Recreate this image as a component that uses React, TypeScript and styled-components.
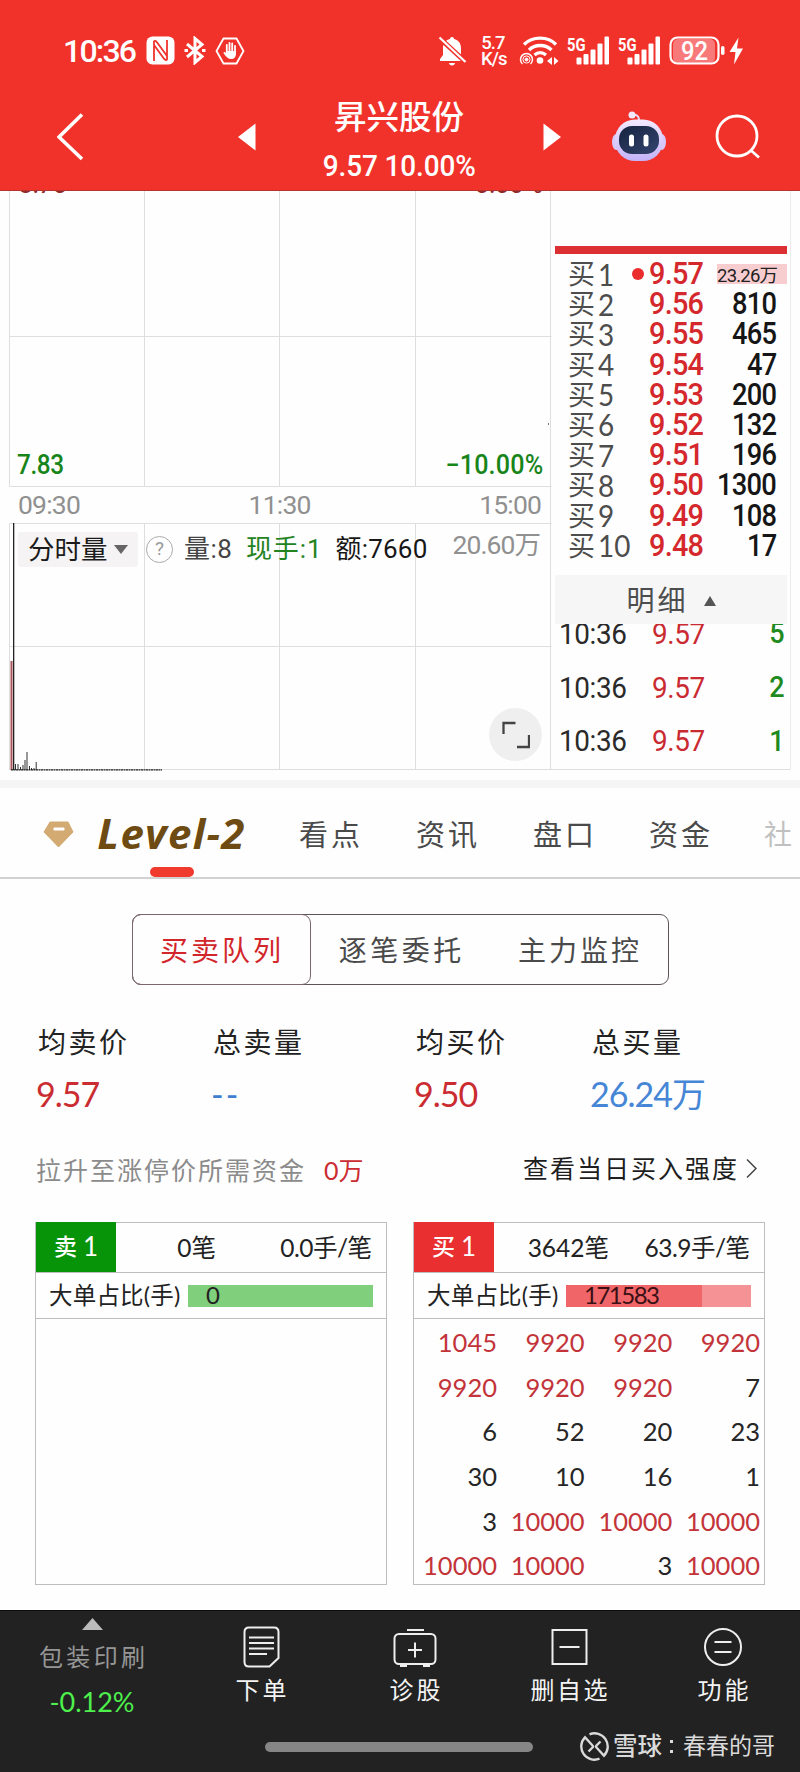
import React from 'react';
import styled, { createGlobalStyle } from 'styled-components';

const DIN = `Roboto, "Noto Sans CJK SC", sans-serif`;
const KAI = `Lato, "Noto Sans CJK SC", sans-serif`;

const GlobalStyle = createGlobalStyle`
  * { box-sizing: border-box; }
  body { margin: 0; background: #fff; }
  svg { display: block; flex: none; }
`;

const Screen = styled.div`
  width: 800px;
  height: 1772px;
  overflow: hidden;
  display: flex;
  flex-direction: column;
  background: #fefefe;
  font-family: ${KAI};
  color: #222;
`;

const Label = styled.span<{ $size: number; $ls?: number; $color?: string; $weight?: number; $din?: boolean; $narrow?: 'left' | 'right' | 'center'; $scale?: number }>`
  font-family: ${p => (p.$din ? DIN : KAI)};
  font-size: ${p => p.$size}px;
  line-height: 1.2;
  letter-spacing: ${p => p.$ls ?? 0}px;
  margin-right: ${p => -(p.$ls ?? 0)}px;
  color: ${p => p.$color ?? 'inherit'};
  font-weight: ${p => p.$weight ?? 400};
  white-space: nowrap;
  flex: none;
  ${p => p.$narrow && `display: inline-block; transform: scaleX(${p.$scale ?? 0.93}); transform-origin: ${p.$narrow} center;`}
`;

/* ---------- header ---------- */
const Header = styled.header`
  height: 191px;
  flex: none;
  background: #f1322b;
  border-bottom: 1px solid #b9332e;
  color: #fff;
`;
const StatusBar = styled.div`
  height: 74px;
  padding: 28px 56px 0 63px;
  display: flex;
  align-items: center;
`;
const StatusGroup = styled.div<{ $gap: number; $right?: boolean }>`
  display: flex;
  align-items: center;
  gap: ${p => p.$gap}px;
  margin-left: ${p => (p.$right ? 'auto' : '0')};
`;
const NetSpeed = styled.div`
  width: 24px;
  margin: 0 6px;
  font: 500 18.5px/16px ${DIN};
  letter-spacing: -0.9px;
  text-align: center;
`;
const TitleBar = styled.div`
  height: 116px;
  padding-top: 10px;
  display: grid;
  grid-template-columns: 57px 181px 85px 220px 69px 103px 1fr;
  align-items: center;
  & > :first-child { grid-column: 2; }
`;
const StockTitle = styled.div`
  display: flex;
  flex-direction: column;
  align-items: center;
  width: 152px;
  padding-top: 2px;
`;
const StockName = styled.h1`
  margin: 0 0 5px;
  font: 500 32.5px/50px ${DIN};
`;

/* ---------- quote area ---------- */
const Quote = styled.section`
  position: relative;
  height: 589px;
  flex: none;
  display: grid;
  grid-template-columns: 551px 249px;
`;
const ChartArt = styled.svg`
  position: absolute;
  left: 0;
  top: 0;
`;
const ChartPane = styled.div`
  position: relative;
  display: flex;
  flex-direction: column;
`;
const ClippedScale = styled.div`
  height: 4px;
  overflow: hidden;
  padding: 0 8px 0 18px;
  display: flex;
  justify-content: space-between;
  align-items: flex-end;
  & > span { margin-bottom: -5px; }
`;
const ScaleRow = styled.div<{ $top: number; $height: number; $left: number; $right: number }>`
  margin-top: ${p => p.$top}px;
  height: ${p => p.$height}px;
  padding: 0 ${p => p.$right}px 0 ${p => p.$left}px;
  display: flex;
  align-items: center;
  justify-content: space-between;
`;
const VolumeRow = styled.div`
  margin-top: 13px;
  height: 35px;
  padding: 0 10px 0 18px;
  display: flex;
  align-items: center;
`;
const MetricButton = styled.button`
  border: 0;
  width: 120px;
  height: 35px;
  padding: 0 10px;
  border-radius: 3px;
  background: #f6f3f4;
  display: flex;
  align-items: center;
  justify-content: space-between;
  color: #1b1b1b;
`;
const Help = styled.span`
  width: 27px;
  height: 27px;
  margin: 0 11px 0 8px;
  border: 1.5px solid #aaa;
  border-radius: 50%;
  color: #999;
  font: 19px/24px ${DIN};
  text-align: center;
`;
const Metrics = styled.div`
  display: flex;
  gap: 14px;
  flex: 1;
`;
const VolumeMax = styled.div`
  padding-bottom: 9px;
`;
const ExpandButton = styled.button`
  margin: 141px 9px 0 auto;
  width: 53px;
  height: 53px;
  border: 0;
  padding: 0;
  border-radius: 50%;
  background: #efefef;
  display: grid;
  place-items: center;
`;
const BookPane = styled.div`
  position: relative;
  padding: 55px 13px 0 4px;
`;
const AskBar = styled.div`
  height: 8px;
  background: #dc2f32;
`;
const Book = styled.div`
  padding-top: 4px;
  margin-bottom: 15px;
`;
const BookRow = styled.div`
  height: 30.2px;
  display: grid;
  grid-template-columns: 13px 64px 17px 1fr auto;
  align-items: center;
  padding-right: 10px;
  & span { line-height: 1; }
`;
const LevelName = styled.div`
  display: flex;
  align-items: center;
  gap: 3px;
  color: #4d4d4d;
`;
const Dot = styled.i`
  width: 12px;
  height: 12px;
  border-radius: 50%;
  background: #ea2d2d;
`;
const Highlight = styled.div`
  height: 20px;
  width: 70px;
  margin-right: -10px;
  padding: 5px 9px 0 0;
  background: #f8cdd0;
  display: flex;
  align-items: center;
  justify-content: flex-end;
`;
const DetailBar = styled.div`
  height: 49px;
  background: #f6f6f6;
  display: flex;
  align-items: center;
  justify-content: center;
  gap: 18px;
  color: #4d4d4d;
  padding-top: 3px;
`;
const Trades = styled.div`
  height: 145px;
  overflow: hidden;
`;
const TradeRow = styled.div<{ $first?: boolean }>`
  height: 53.8px;
  margin-top: ${p => (p.$first ? -17 : 0)}px;
  padding: 0 3px 0 4px;
  display: grid;
  grid-template-columns: 93px 1fr auto;
  align-items: center;
`;

/* ---------- tabs ---------- */
const Band = styled.div`
  height: 8px;
  flex: none;
  background: #f5f5f5;
`;
const Tabs = styled.nav`
  height: 91px;
  flex: none;
  border-bottom: 2px solid #d2d2d2;
  display: grid;
  grid-template-columns: 98px 201px 117px 117px 116px 115px 1fr;
  color: #4a4a4a;
`;
const Tab = styled.div<{ $fade?: boolean }>`
  display: flex;
  align-items: center;
  padding-top: 5px;
  overflow: hidden;
  opacity: ${p => (p.$fade ? 0.34 : 1)};
`;
const ActiveTab = styled.div`
  display: flex;
  flex-direction: column;
  width: 147px;
  align-items: center;
  justify-content: space-between;
  padding-top: 22px;
`;
const Level = styled.span`
  font: italic 700 42px/46px "Open Sans", Lato, sans-serif;
  letter-spacing: 1.3px;
  color: #6d4b12;
  white-space: nowrap;
`;
const Underline = styled.i`
  width: 44px;
  height: 10px;
  border-radius: 5px;
  background: #f13a2e;
`;

/* ---------- segmented control ---------- */
const Segments = styled.div`
  width: 537px;
  height: 71px;
  flex: none;
  margin: 35px 0 0 132px;
  border: 1px solid #5d5458;
  border-radius: 9px;
  display: grid;
  grid-template-columns: 178px 180px 1fr;
`;
const Segment = styled.button<{ $active?: boolean }>`
  border: 0;
  padding: 2px 2px 0 0;
  background: none;
  display: flex;
  align-items: center;
  justify-content: center;
  color: ${p => (p.$active ? '#d2262b' : '#4a4a4a')};
  margin: ${p => (p.$active ? '-1px 0 -1px -1px' : '0')};
  ${p => p.$active && 'border: 1px solid #7b666c; border-radius: 9px;'}
`;

/* ---------- summary ---------- */
const Summary = styled.div`
  height: 130px;
  flex: none;
  padding: 37px 0 0 36px;
  display: grid;
  grid-template-columns: 175px 203px 176px 1fr;
`;
const Stat = styled.div`
  display: flex;
  flex-direction: column;
  gap: 13px;
  & > :first-child { padding-left: 2px; line-height: 40px; }
  & > :last-child { line-height: 38px; }
`;
const FundsRow = styled.div`
  height: 107px;
  flex: none;
  padding: 3px 43px 0 36px;
  display: flex;
  align-items: center;
`;
const FundsValue = styled.div`
  margin-left: 20px;
`;
const FundsLink = styled.a`
  margin-left: auto;
  padding-bottom: 4px;
  display: flex;
  align-items: center;
  gap: 9px;
  color: #1e1e1e;
`;

/* ---------- queues ---------- */
const Queues = styled.div`
  flex: none;
  padding: 0 35px;
  display: flex;
  justify-content: space-between;
`;
const Card = styled.div`
  width: 352px;
  height: 363px;
  border: 1px solid #bdbdbd;
`;
const CardHead = styled.div<{ $count: number }>`
  height: 50px;
  border-bottom: 1px solid #bdbdbd;
  display: grid;
  grid-template-columns: 80px ${p => p.$count}px 1fr;
  align-items: center;
  justify-items: end;
  padding-right: 14px;
  color: #222;
`;
const Side = styled.div<{ $color: string }>`
  align-self: stretch;
  justify-self: stretch;
  margin-top: -1px;
  background: ${p => p.$color};
  color: #fff;
  display: flex;
  align-items: center;
  justify-content: center;
  gap: 6px;
`;
const RatioRow = styled.div`
  height: 46px;
  border-bottom: 1px solid #bdbdbd;
  padding: 0 13px;
  display: flex;
  align-items: center;
  justify-content: space-between;
`;
const RatioBar = styled.div<{ $from: string; $to: string; $split: number }>`
  width: 185px;
  height: 22px;
  display: flex;
  align-items: center;
  padding-left: 18px;
  background: linear-gradient(90deg, ${p => p.$from} ${p => p.$split}%, ${p => p.$to} ${p => p.$split}%);
`;
const Orders = styled.div`
  padding: 1px 4px 0 0;
  display: grid;
  grid-template-columns: 83px repeat(3, 1fr);
  grid-auto-rows: 44.7px;
  align-items: center;
  justify-items: end;
`;

/* ---------- bottom bar ---------- */
const Footer = styled.footer`
  margin-top: auto;
  height: 162px;
  flex: none;
  background: #222;
  border-top: 1px solid #0c0c0c;
  color: #f4f4f4;
`;
const NavRow = styled.div`
  height: 121px;
  display: grid;
  grid-template-columns: 184px repeat(4, 154px);
`;
const NavItem = styled.div`
  display: flex;
  flex-direction: column;
  align-items: center;
  padding-top: 15px;
  gap: 8px;
`;
const Industry = styled.div`
  display: flex;
  flex-direction: column;
  align-items: center;
  padding-top: 7px;
  & > :nth-child(2) { line-height: 53px; }
  & > :nth-child(3) { line-height: 37px; }
`;
const HomeRow = styled.div`
  height: 30px;
  padding: 0 25px 0 265px;
  display: flex;
  align-items: center;
  justify-content: space-between;
`;
const HomeIndicator = styled.i`
  width: 268px;
  height: 10px;
  border-radius: 5px;
  background: #868686;
`;
const Watermark = styled.div`
  display: flex;
  align-items: center;
  gap: 4px;
  color: #dadada;
`;
const Colon = styled.i`
  width: 3px;
  height: 13px;
  margin: 0 6px 0 4px;
  border: solid #dadada;
  border-width: 3px 0;
`;

const Signal = () => (
  <svg width="43" height="30" viewBox="0 0 43 30">
    <text x="0" y="14.500" fill="#fff" fontFamily="Roboto" fontWeight="700" fontSize="18" textLength="18.500" lengthAdjust="spacingAndGlyphs">5G</text>
    <g fill="#fff">
      <rect x="9.500" y="21.500" width="5" height="7" rx="1" /><rect x="16.500" y="18" width="5" height="10.500" rx="1" />
      <rect x="23.500" y="13.500" width="5" height="15" rx="1" /><rect x="30.500" y="7.500" width="5" height="21" rx="1" />
      <rect x="37.500" y="0.500" width="4.500" height="28" rx="1" />
    </g>
  </svg>
);

const levels: [string, string, string][] = [
  ['1', '9.57', '23.26万'], ['2', '9.56', '810'], ['3', '9.55', '465'], ['4', '9.54', '47'], ['5', '9.53', '200'],
  ['6', '9.52', '132'], ['7', '9.51', '196'], ['8', '9.50', '1300'], ['9', '9.49', '108'], ['10', '9.48', '17'],
];
const orders = [
  1045, 9920, 9920, 9920, 9920, 9920, 9920, 7, 6, 52, 20, 23,
  30, 10, 16, 1, 3, 10000, 10000, 10000, 10000, 10000, 3, 10000,
];
const stats: [string, string, string, number][] = [
  ['均卖价', '9.57', '#cb2c31', -1], ['总卖量', '--', '#3f7fd0', 2], ['均买价', '9.50', '#cb2c31', -1], ['总买量', '26.24万', '#4686d6', -1],
];
const smallBars = [[15, 6], [17.5, 6], [20, 3], [22.5, 5], [24.500, 10], [26.500, 18], [29, 4], [31, 2], [33.500, 2], [35.700, 8]];

const StatusIcons = () => (
  <StatusGroup $gap={9}>
    <Label $din $size={32} $ls={-1.8} $weight={500}>10:36</Label>
    <svg width="29" height="29" viewBox="0 0 29 29">
      <rect x="0.500" y="0.500" width="28" height="28" rx="6" fill="#fff" />
      <path d="M8 25V5.500q1-1.500 3 .8L21 20M21 4v19.500q-1 1.500-3-.8L8 9" fill="none" stroke="#f1322b" strokeWidth="1.800" />
    </svg>
    <svg width="22" height="29" viewBox="0 0 22 29" fill="none" stroke="#fff" strokeWidth="3">
      <path d="M3 8l15 12.500-7 6V2.500l7 6L3 21" /><path d="M0.500 14.500h3.500M18 14.500h3.500" />
    </svg>
    <svg width="30" height="28" viewBox="0 0 30 28">
      <path d="M8.500 1.500h13L28.500 14l-7 12.500h-13L1.500 14z" fill="none" stroke="#fff" strokeWidth="1.800" />
      <path d="M11.800 8v8M14.500 6v9M17.200 6.500v9M20 9v8" stroke="#fff" strokeWidth="1.800" strokeLinecap="round" />
      <path d="M10.900 14h10v3c0 3-2 5-4.500 5-3.500 0-5-2-8-6 .5-1.400 1.600-1 2.500.3z" fill="#fff" />
    </svg>
  </StatusGroup>
);

const SystemIcons = () => (
  <StatusGroup $gap={8} $right>
    <svg width="29" height="32" viewBox="0 0 29 32">
      <path d="M14 2c1.200 0 2 .7 2 2 4.700 1 7 4.600 7 9v7l3 4v2H2v-2l3-4v-7c0-4.400 2.300-8 7-9 0-1.300.8-2 2-2zM11 28h6c-.5 1.800-1.500 2.500-3 2.500S11.500 29.800 11 28z" fill="#fff" />
      <path d="M0.500 2l27 25" stroke="#f1322b" strokeWidth="5" /><path d="M1.500 2.500l26 24.500" stroke="#fff" strokeWidth="2.200" />
    </svg>
    <NetSpeed>5.7<br />K/s</NetSpeed>
    <svg width="40" height="32" viewBox="0 0 40 32" fill="none" stroke="#fff">
      <path d="M5 9.500C13.500 1 29 1 37 9.500M10 15c6-6 16.500-6 22.500 0M15.500 20c3.500-3 8-3 11.500 0" strokeWidth="3.300" />
      <circle cx="21" cy="25.500" r="3.300" fill="#fff" stroke="none" />
      <circle cx="7.500" cy="24.500" r="1.500" fill="#fff" /><circle cx="7.500" cy="24.500" r="3.600" strokeWidth="1" />
      <path d="M3.500 29a6 6 0 1 1 8 0" strokeWidth="1.500" />
      <path d="M28 26l5-4v8zM39.500 26l-4.500-4v8z" fill="#fff" stroke="none" />
    </svg>
    <Signal />
    <Signal />
    <svg width="75" height="30" viewBox="0 0 75 30">
      <rect x="4" y="3" width="42" height="24" rx="5" fill="#f8797a" />
      <rect x="1.500" y="1.500" width="48" height="26" rx="7" fill="none" stroke="#fff" strokeWidth="2.200" />
      <text x="12" y="23.500" fill="#fff" fontFamily="Roboto" fontWeight="500" fontSize="25" textLength="27" lengthAdjust="spacingAndGlyphs">92</text>
      <rect x="52" y="10" width="3.500" height="9" rx="1.700" fill="#fff" />
      <path d="M69.500 1.500L60.500 16h6l-1.500 12.500L74 12.500h-6z" fill="#fff" />
    </svg>
  </StatusGroup>
);

export default function App() {
  return (
    <Screen>
      <GlobalStyle />
      <Header>
        <StatusBar><StatusIcons /><SystemIcons /></StatusBar>
        <TitleBar>
          <svg width="27" height="50" viewBox="0 0 27 50"><path d="M25 2.500L2 25l23 22" fill="none" stroke="#fff" strokeWidth="3.600" /></svg>
          <svg width="18" height="28" viewBox="0 0 18 28"><path d="M17.500 0.500v27L0 14z" fill="#fff" /></svg>
          <StockTitle>
            <StockName>昇兴股份</StockName>
            <Label $din $size={30} $ls={-0.1} $weight={500} $narrow="center">9.57 10.00%</Label>
          </StockTitle>
          <svg width="18" height="28" viewBox="0 0 18 28"><path d="M0.500 0.500v27L18 14z" fill="#fff" /></svg>
          <svg width="54" height="52" viewBox="0 0 54 52">
            <defs>
              <linearGradient id="shell" x1="0" y1="0" x2="0" y2="1"><stop offset="0" stopColor="#f3eaff" /><stop offset="1" stopColor="#c3b3f8" /></linearGradient>
              <linearGradient id="visor" x1="0" y1="0" x2="1" y2="1"><stop offset="0" stopColor="#16233f" /><stop offset="1" stopColor="#34456f" /></linearGradient>
            </defs>
            <path d="M20 4q7-1 7 5" fill="none" stroke="#e8dcff" strokeWidth="2" /><circle cx="20" cy="4" r="3.500" fill="#f3e8ff" />
            <ellipse cx="4.500" cy="31" rx="4.500" ry="8" fill="#d7cafa" /><ellipse cx="49.500" cy="31" rx="4.500" ry="8" fill="#d7cafa" />
            <rect x="3" y="8.500" width="48" height="41.500" rx="20" fill="url(#shell)" />
            <rect x="7" y="15" width="40" height="28" rx="13" fill="url(#visor)" />
            <rect x="17" y="23.500" width="5" height="12" rx="2.500" fill="#fff" /><rect x="31.500" y="23.500" width="5" height="12" rx="2.500" fill="#fff" />
          </svg>
          <svg width="46" height="46" viewBox="0 0 46 46" fill="none" stroke="#fff" strokeWidth="2.800"><circle cx="22" cy="22" r="20" /><path d="M35.500 36l8.500 7.500" /></svg>
        </TitleBar>
      </Header>

      <Quote>
        <ChartArt width="800" height="589" viewBox="0 191 800 589">
          <g stroke="#dedede" strokeWidth="1">
            <path d="M9.500 191V486.500H551.500M9.500 336.500H551.500M144.500 191V486M279.500 191V486M415.500 191V486" fill="none" />
            <path d="M9.500 770V523.500H551.500M9.500 646.500H551.500M9.500 769.500H790.500M144.500 523V769M279.500 523V769M415.500 523V769M550.500 191V769" fill="none" />
            <path d="M790.500 191V769" stroke="#ebebeb" />
          </g>
          <path d="M548.500 423v2" stroke="#777" />
          <rect x="10.500" y="661" width="2" height="109" fill="#a9565c" />
          <rect x="13" y="523" width="1.300" height="247" fill="#222" />
          {smallBars.map(([x, h]) => <rect key={x} x={x} y={770 - h} width="1" height={h} fill="#333" />)}
          <path d="M11 769.800H162" stroke="#222" strokeWidth="1.300" strokeDasharray="2 0.500" />
        </ChartArt>
        <ChartPane>
          <ClippedScale>
            <Label $din $size={27} $ls={-1} $color="#8d2a2a">8.70</Label>
            <Label $din $size={27} $ls={-1} $color="#8d2a2a">0.00%</Label>
          </ClippedScale>
          <ScaleRow $top={256} $height={28} $left={17} $right={8}>
            <Label $din $size={27} $ls={-0.4} $weight={500} $narrow="left" $scale={0.9} $color="#18851b">7.83</Label>
            <Label $din $size={27} $ls={0.2} $weight={500} $narrow="right" $color="#18851b">−10.00%</Label>
          </ScaleRow>
          <ScaleRow $top={12} $height={28} $left={18} $right={9}>
            <Label $din $size={26.5} $ls={-0.8} $color="#909090">09:30</Label>
            <Label $din $size={26.5} $ls={-0.8} $color="#909090">11:30</Label>
            <Label $din $size={26.5} $ls={-0.8} $color="#909090">15:00</Label>
          </ScaleRow>
          <VolumeRow>
            <MetricButton>
              <Label $din $size={26.5}>分时量</Label>
              <svg width="14" height="9" viewBox="0 0 14 9"><path d="M0 0h14L7 9z" fill="#656565" /></svg>
            </MetricButton>
            <Help>?</Help>
            <Metrics>
              <Label $din $size={26} $ls={0.5} $color="#444">量:8</Label>
              <Label $din $size={26} $ls={0.9} $color="#23831f">现手:1</Label>
              <Label $din $size={26} $ls={0.2} $color="#171717">额:7660</Label>
            </Metrics>
            <VolumeMax><Label $din $size={26.5} $ls={-0.9} $color="#909090">20.60万</Label></VolumeMax>
          </VolumeRow>
          <ExpandButton>
            <svg width="28" height="28" viewBox="0 0 28 28"><path d="M1.500 13V2h12M27 14v12H15" fill="none" stroke="#444" strokeWidth="2.300" /></svg>
          </ExpandButton>
        </ChartPane>
        <BookPane>
          <AskBar />
          <Book>
            {levels.map(([n, price, qty], i) => (
              <BookRow key={n}>
                <span />
                <LevelName><Label $size={27}>买</Label><Label $size={30} $narrow="left">{n}</Label></LevelName>
                {i === 0 ? <Dot /> : <span />}
                <Label $din $size={31} $ls={-0.8} $weight={500} $narrow="left" $color="#d4282d">{price}</Label>
                {i === 0
                  ? <Highlight><Label $din $size={18.5} $ls={-0.8}>{qty}</Label></Highlight>
                  : <Label $din $size={31} $ls={-0.9} $weight={500} $narrow="right" $scale={0.88} $color="#161616">{qty}</Label>}
              </BookRow>
            ))}
          </Book>
          <DetailBar>
            <Label $size={28} $ls={3}>明细</Label>
            <svg width="12" height="10" viewBox="0 0 12 10"><path d="M0 10h12L6 0z" fill="#555" /></svg>
          </DetailBar>
          <Trades>
            {['5', '2', '1'].map((n, i) => (
              <TradeRow key={n} $first={i === 0}>
                <Label $din $size={30} $ls={-0.4} $narrow="left" $color="#2a2a2a">10:36</Label>
                <Label $din $size={30} $ls={-0.4} $narrow="left" $color="#ca2a31">9.57</Label>
                <Label $din $size={29} $weight={500} $narrow="right" $color="#1f8a20">{n}</Label>
              </TradeRow>
            ))}
          </Trades>
        </BookPane>
      </Quote>

      <Band />
      <Tabs>
        <Tab>
          <svg width="74" height="28" viewBox="0 0 74 28"><path d="M50 1h18l5 10-14.500 15L44 11z" fill="#d2aa72" stroke="#d2aa72" strokeLinejoin="round" /><rect x="53.500" y="6.500" width="11" height="3" rx="1" fill="#fff" /></svg>
        </Tab>
        <ActiveTab><Level>Level-2</Level><Underline /></ActiveTab>
        {['看点', '资讯', '盘口', '资金'].map(t => <Tab key={t}><Label $size={29} $ls={3}>{t}</Label></Tab>)}
        <Tab $fade><Label $size={28}>社</Label></Tab>
      </Tabs>

      <Segments>
        <Segment $active><Label $size={28} $ls={3}>买卖队列</Label></Segment>
        <Segment><Label $size={28} $ls={3.5}>逐笔委托</Label></Segment>
        <Segment><Label $size={28} $ls={3}>主力监控</Label></Segment>
      </Segments>

      <Summary>
        {stats.map(([name, value, color, spacing]) => (
          <Stat key={name}>
            <Label $size={28} $ls={2.5}>{name}</Label>
            <Label $size={34} $ls={spacing} $color={color}>{value}</Label>
          </Stat>
        ))}
      </Summary>
      <FundsRow>
        <Label $size={25} $ls={2} $color="#8b8b8b">拉升至涨停价所需资金</Label>
        <FundsValue><Label $size={25} $color="#cb2c31">0万</Label></FundsValue>
        <FundsLink>
          <Label $size={25} $ls={2}>查看当日买入强度</Label>
          <svg width="11" height="21" viewBox="0 0 11 21"><path d="M1 1.500l9 9-9 9" fill="none" stroke="#444" strokeWidth="1.500" /></svg>
        </FundsLink>
      </FundsRow>

      <Queues>
        <Card>
          <CardHead $count={100}>
            <Side $color="#089408"><Label $size={23} $weight={500}>卖</Label><Label $size={26}>1</Label></Side>
            <Label $size={24.5}>0笔</Label>
            <Label $size={24.5} $ls={-0.5}>0.0手/笔</Label>
          </CardHead>
          <RatioRow>
            <Label $size={23.5} $ls={0.2}>大单占比(手)</Label>
            <RatioBar $from="#80cf7c" $to="#80cf7c" $split={100}><Label $size={24}>0</Label></RatioBar>
          </RatioRow>
        </Card>
        <Card>
          <CardHead $count={115}>
            <Side $color="#e92f30"><Label $size={23} $weight={500}>买</Label><Label $size={26}>1</Label></Side>
            <Label $size={24.5}>3642笔</Label>
            <Label $size={24.5} $ls={-0.5}>63.9手/笔</Label>
          </CardHead>
          <RatioRow>
            <Label $size={23.5} $ls={0.2}>大单占比(手)</Label>
            <RatioBar $from="#f06567" $to="#f59296" $split={73.5}><Label $size={24} $ls={-1.5} $color="#3a1015">171583</Label></RatioBar>
          </RatioRow>
          <Orders>
            {orders.map((n, i) => <Label key={i} $size={25.5} $color={n > 1000 ? '#c3343a' : '#262626'}>{n}</Label>)}
          </Orders>
        </Card>
      </Queues>

      <Footer>
        <NavRow>
          <Industry>
            <svg width="21" height="12" viewBox="0 0 21 12"><path d="M0 12h21L10.500 0z" fill="#bcbcbc" /></svg>
            <Label $size={24} $ls={3.3} $color="#969696">包装印刷</Label>
            <Label $size={27} $ls={0} $color="#4df04d">-0.12%</Label>
          </Industry>
          <NavItem>
            <svg width="37" height="42" viewBox="0 0 37 42" fill="none" stroke="#eee" strokeWidth="2"><path d="M6 1.500h25q4.500 0 4.500 4.500v26l-9 8.500H6Q1.500 40.500 1.500 36V6Q1.500 1.500 6 1.500zM6 11.500h25M6 17h25M6 22.500h25M6 28h18" /></svg>
            <Label $size={24} $ls={3}>下单</Label>
          </NavItem>
          <NavItem>
            <svg width="44" height="42" viewBox="0 0 44 42" fill="none" stroke="#eee" strokeWidth="2"><rect x="1.500" y="8" width="41" height="30" rx="4.500" /><path d="M14 4h17M7 40h7M30 40h7M15 24h14M22 16.500v15" /></svg>
            <Label $size={24} $ls={3}>诊股</Label>
          </NavItem>
          <NavItem>
            <svg width="37" height="42" viewBox="0 0 37 42" fill="none" stroke="#eee" strokeWidth="2"><rect x="1.500" y="4" width="34" height="34" /><path d="M8.500 21h20" /></svg>
            <Label $size={24} $ls={2.500}>删自选</Label>
          </NavItem>
          <NavItem>
            <svg width="40" height="42" viewBox="0 0 40 42" fill="none" stroke="#eee" strokeWidth="2"><circle cx="20" cy="21" r="18" /><path d="M11.500 16h17M11.500 26h17" /></svg>
            <Label $size={24} $ls={3}>功能</Label>
          </NavItem>
        </NavRow>
        <HomeRow>
          <HomeIndicator />
          <Watermark>
            <svg width="29" height="29" viewBox="0 0 29 29" fill="none" stroke="#dadada" strokeWidth="2.400">
              <path d="M9.500 2.300A13.200 13.200 0 0 1 24 23.700L16.500 15.500Q15.500 14.500 16.500 13.500L20.500 9.500" />
              <path d="M19.500 26.700A13.200 13.200 0 0 1 5 5.300L12.500 13.500Q13.500 14.500 12.500 15.500L8.500 19.500" />
            </svg>
            <Label $din $size={24.500} $weight={500}>雪球</Label>
            <Colon />
            <Label $din $size={23}>春春的哥</Label>
          </Watermark>
        </HomeRow>
      </Footer>
    </Screen>
  );
}
